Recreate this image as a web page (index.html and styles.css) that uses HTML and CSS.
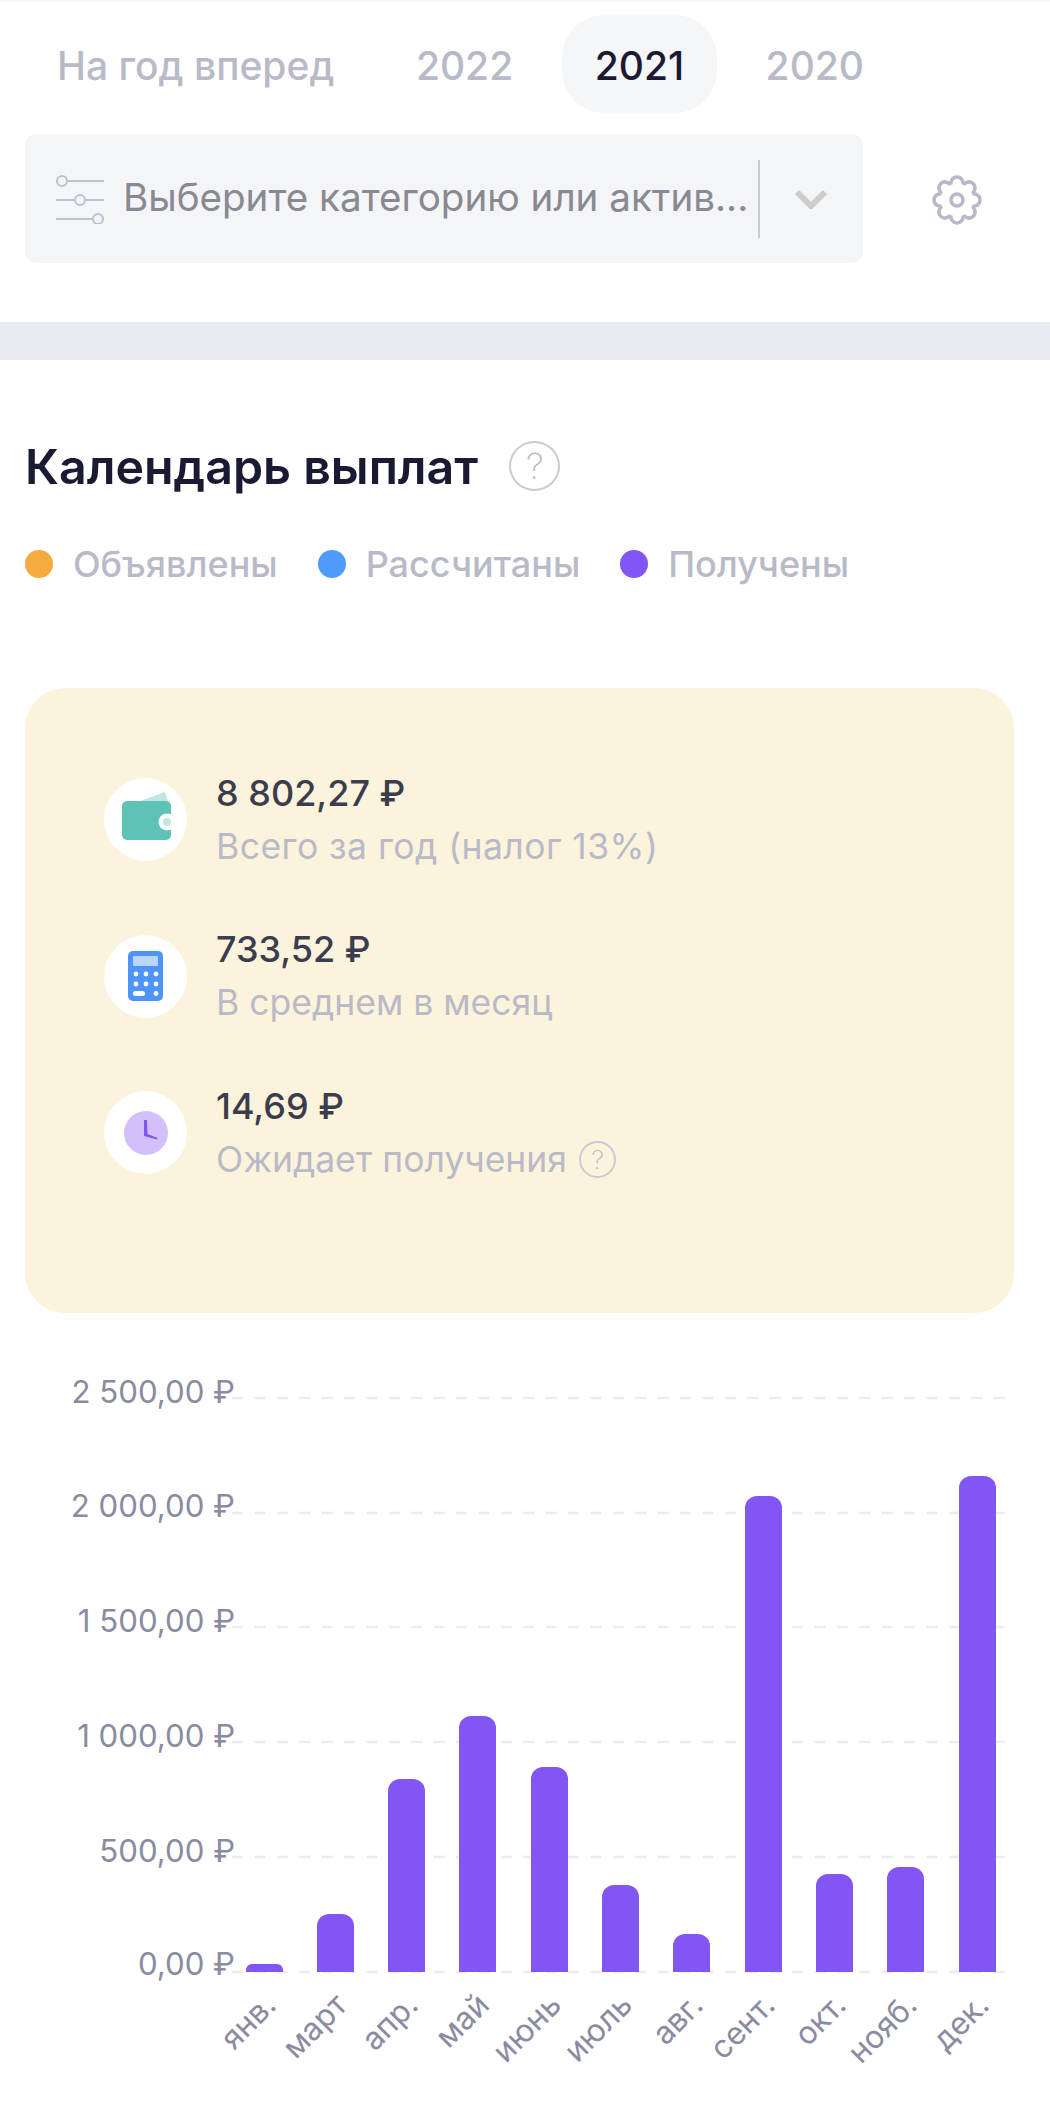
FILE: index.html
```html
<!DOCTYPE html>
<html lang="ru">
<head>
  <meta charset="UTF-8" />
  <meta name="viewport" content="width=device-width, initial-scale=1.0"/>
  <title>Календарь выплат</title>
  <link rel="stylesheet" href="styles.css">
</head>
<body>
  <div class="tabs">
    <span class="tab">На год вперед</span>
    <span class="tab">2022</span>
    <span class="tab tab-active">2021</span>
    <span class="tab">2020</span>
  </div>

  <div class="filter-row">
    <div class="select">
      <svg class="select-icon" width="50" height="50" viewBox="0 0 50 50">
        <circle cx="7" cy="7" r="5"/><path d="M12 7h37"/>
        <circle cx="25" cy="26" r="5"/><path d="M1 26h19M30 26h19"/>
        <circle cx="43" cy="45" r="5"/><path d="M1 45h37"/>
      </svg>
      <span class="select-text">Выберите категорию или актив...</span>
      <span class="select-divider"></span>
      <svg class="select-arrow" width="34" height="20" viewBox="0 0 34 20"><path d="M3 3l14 14L31 3"/></svg>
    </div>
    <svg class="gear" width="60" height="60" viewBox="-30 -30 60 60">
      <g>
        <path id="tooth" d="M-6.400-15.400C-6-19.500-4.600-23 0-23S6-19.500 6.400-15.400"/>
        <use href="#tooth" transform="rotate(45)"/>
        <use href="#tooth" transform="rotate(90)"/>
        <use href="#tooth" transform="rotate(135)"/>
        <use href="#tooth" transform="rotate(180)"/>
        <use href="#tooth" transform="rotate(225)"/>
        <use href="#tooth" transform="rotate(270)"/>
        <use href="#tooth" transform="rotate(315)"/>
      </g>
      <circle r="6"/>
    </svg>
  </div>

  <div class="band"></div>

  <div class="title-row">
    <h2>Календарь выплат</h2>
    <span class="help help-big">?</span>
  </div>

  <div class="legend">
    <span class="legend-item"><i class="dot dot-orange"></i>Объявлены</span>
    <span class="legend-item"><i class="dot dot-blue"></i>Рассчитаны</span>
    <span class="legend-item"><i class="dot dot-purple"></i>Получены</span>
  </div>

  <div class="card">
    <div class="stat">
      <div class="stat-icon">
        <svg width="83" height="83" viewBox="0 0 83 83">
          <path d="M36 23l25-9 3 9z" fill="#bfe6e1"/>
          <rect x="18" y="23" width="49" height="39" rx="5" fill="#5fc2b6"/>
          <circle cx="63" cy="44" r="8.5" fill="#fff"/>
          <circle cx="63" cy="44" r="4" fill="#bfe6e1"/>
        </svg>
      </div>
      <div class="stat-text">
        <div class="stat-value">8 802,27 ₽</div>
        <div class="stat-label stat-label-wide">Всего за год (налог 13%)</div>
      </div>
    </div>
    <div class="stat">
      <div class="stat-icon">
        <svg width="83" height="83" viewBox="0 0 83 83">
          <rect x="24" y="16" width="35" height="50" rx="5" fill="#4f94f8"/>
          <rect x="29" y="21" width="25" height="10" rx="1" fill="#bcd6fb"/>
          <g fill="#fff">
            <circle cx="32" cy="39" r="2.4"/><circle cx="42" cy="39" r="2.4"/><circle cx="52" cy="39" r="2.4"/>
            <circle cx="32" cy="49" r="2.4"/><circle cx="42" cy="49" r="2.4"/><circle cx="52" cy="49" r="2.4"/>
            <rect x="29" y="56" width="12" height="5" rx="2.5"/><circle cx="52" cy="58.500" r="2.4"/>
          </g>
        </svg>
      </div>
      <div class="stat-text">
        <div class="stat-value">733,52 ₽</div>
        <div class="stat-label">В среднем в месяц</div>
      </div>
    </div>
    <div class="stat">
      <div class="stat-icon">
        <svg width="83" height="83" viewBox="0 0 83 83">
          <circle cx="42" cy="42" r="22" fill="#d3c0fb"/>
          <path d="M40 29h3l.5 14 10 4-.5 1.500-13-3.500z" fill="#7f56f0"/>
        </svg>
      </div>
      <div class="stat-text">
        <div class="stat-value">14,69 ₽</div>
        <div class="stat-label">Ожидает получения <span class="help help-small">?</span></div>
      </div>
    </div>
  </div>

  <svg class="chart" width="1050" height="762" viewBox="0 1360 1050 762">
    <g class="grid">
      <path d="M232 1398H1005M232 1513H1005M232 1627H1005M232 1742H1005M232 1857H1005M232 1972H1005"/>
    </g>
    <g class="y-labels">
      <text x="235" y="1403">2 500,00 ₽</text>
      <text x="235" y="1517">2 000,00 ₽</text>
      <text x="235" y="1632">1 500,00 ₽</text>
      <text x="235" y="1747">1 000,00 ₽</text>
      <text x="235" y="1862">500,00 ₽</text>
      <text x="235" y="1975">0,00 ₽</text>
    </g>
    <g class="bars">
      <path d="M246 1972v-2a6 6 0 0 1 6-6h25a6 6 0 0 1 6 6v2z"/>
      <path d="M317 1972V1926a12 12 0 0 1 12-12h13a12 12 0 0 1 12 12v46z"/>
      <path d="M388 1972V1791a12 12 0 0 1 12-12h13a12 12 0 0 1 12 12v181z"/>
      <path d="M459 1972V1728a12 12 0 0 1 12-12h13a12 12 0 0 1 12 12v244z"/>
      <path d="M531 1972V1779a12 12 0 0 1 12-12h13a12 12 0 0 1 12 12v193z"/>
      <path d="M602 1972V1897a12 12 0 0 1 12-12h13a12 12 0 0 1 12 12v75z"/>
      <path d="M673 1972V1946a12 12 0 0 1 12-12h13a12 12 0 0 1 12 12v26z"/>
      <path d="M745 1972V1508a12 12 0 0 1 12-12h13a12 12 0 0 1 12 12v464z"/>
      <path d="M816 1972V1886a12 12 0 0 1 12-12h13a12 12 0 0 1 12 12v86z"/>
      <path d="M887 1972V1879a12 12 0 0 1 12-12h13a12 12 0 0 1 12 12v93z"/>
      <path d="M959 1972V1488a12 12 0 0 1 12-12h13a12 12 0 0 1 12 12v484z"/>
    </g>
    <g class="x-labels">
      <text transform="translate(278 2007) rotate(-45)">янв.</text>
      <text transform="translate(349 2007) rotate(-45)">март</text>
      <text transform="translate(420 2007) rotate(-45)">апр.</text>
      <text transform="translate(491 2007) rotate(-45)">май</text>
      <text transform="translate(563 2007) rotate(-45)">июнь</text>
      <text transform="translate(634 2007) rotate(-45)">июль</text>
      <text transform="translate(705 2007) rotate(-45)">авг.</text>
      <text transform="translate(777 2007) rotate(-45)">сент.</text>
      <text transform="translate(848 2007) rotate(-45)">окт.</text>
      <text transform="translate(919 2007) rotate(-45)">нояб.</text>
      <text transform="translate(991 2007) rotate(-45)">дек.</text>
    </g>
  </svg>
</body>
</html>
```

FILE: styles.css
```css
body {
  font-family: 'Inter', 'Liberation Sans', sans-serif;
  background-color: #fff;
  margin: 0;
  padding: 0;
  width: 1050px;
  height: 2122px;
  overflow: hidden;
  border-top: 2px solid #f5f6f9;
  box-sizing: border-box;
}

.tabs {
  display: flex;
  gap: 15.5px;
  padding: 13px 0 0 24px;
}

.tab {
  display: flex;
  align-items: center;
  box-sizing: border-box;
  height: 98px;
  padding: 3px 33px 0;
  border-radius: 42px;
  font-size: 39px;
  font-weight: 500;
  color: #b9bac8;
}

.tab-active {
  background-color: #f5f6f8;
  color: #1a1b33;
}

.filter-row {
  display: flex;
  align-items: center;
  margin-top: 21px;
  padding-left: 25px;
}

.select {
  display: flex;
  align-items: center;
  box-sizing: border-box;
  width: 838px;
  height: 129px;
  padding-left: 30px;
  background-color: #f3f5f9;
  border-radius: 12px;
}

.select-icon {
  flex-shrink: 0;
  fill: none;
  stroke: #c0c1ce;
  stroke-width: 2;
}

.select-text {
  margin-left: 18px;
  margin-bottom: 3px;
  width: 626px;
  flex-shrink: 0;
  font-size: 38.6px;
  color: #89898f;
  white-space: nowrap;
}

.select-divider {
  width: 2px;
  height: 78px;
  margin-left: 9px;
  background-color: #cacbcf;
}

.select-arrow {
  margin-left: 34px;
  fill: none;
  stroke: #cccccc;
  stroke-width: 6;
}

.gear {
  margin-left: 64px;
  margin-top: 3px;
  fill: none;
  stroke: #b8b9c6;
  stroke-width: 3.5;
  stroke-linejoin: round;
}

.band {
  height: 38px;
  margin-top: 59px;
  background-color: #e9eaf2;
}

.title-row {
  display: flex;
  align-items: center;
  margin-top: 81px;
  padding-left: 25px;
}

h2 {
  margin: 0;
  font-size: 48.3px;
  font-weight: 600;
  line-height: 49px;
  color: #1a1b33;
}

.help {
  display: inline-flex;
  align-items: center;
  justify-content: center;
  box-sizing: border-box;
  border: 2px solid #c9cad4;
  border-radius: 50%;
  font-weight: 200;
  color: #b9bac8;
}

.help-big {
  width: 51px;
  height: 50px;
  margin-left: 31px;
  font-size: 36px;
}

.help-small {
  width: 37px;
  height: 37px;
  margin-left: 12px;
  font-size: 26px;
}

.legend {
  display: flex;
  margin-top: 51px;
  padding-left: 25px;
  font-size: 36px;
  font-weight: 500;
  line-height: 44px;
  color: #b9bac8;
}

.legend-item {
  display: flex;
  align-items: center;
  margin-right: 40px;
}

.dot {
  width: 28px;
  height: 28px;
  margin-right: 20px;
  border-radius: 50%;
}

.dot-orange { background-color: #f3ab3c; }
.dot-blue { background-color: #4f9bfa; }
.dot-purple { background-color: #8156f2; }

.card {
  display: flex;
  flex-direction: column;
  gap: 73.5px;
  box-sizing: border-box;
  width: 989px;
  height: 625px;
  margin: 102px 0 0 25px;
  padding: 90px 0 0 79px;
  background-color: #fcf3dc;
  border-radius: 40px;
}

.stat {
  display: flex;
  align-items: center;
  height: 83px;
}

.stat-icon {
  width: 83px;
  height: 83px;
  flex-shrink: 0;
  background-color: #fff;
  border-radius: 50%;
}

.stat-icon svg {
  display: block;
}

.stat-text {
  margin-left: 29px;
}

.stat-value {
  font-size: 36px;
  font-weight: 450;
  line-height: 40px;
  color: #3b3c4e;
}

.stat-label {
  display: flex;
  align-items: center;
  margin-top: 14px;
  font-size: 35.5px;
  line-height: 40px;
  color: #b9bac8;
}

.stat-label-wide {
  letter-spacing: 0.45px;
}

.chart {
  display: block;
  margin-top: 47px;
}

.grid path {
  fill: none;
  stroke: #ebebf2;
  stroke-width: 2.5;
  stroke-dasharray: 11 11.4;
}

.bars path {
  fill: #8156f2;
}

.y-labels text {
  font-size: 31.2px;
  fill: #8a8ba0;
  text-anchor: end;
}

.x-labels text {
  font-size: 31.3px;
  fill: #8a8ba0;
  text-anchor: end;
}
```
